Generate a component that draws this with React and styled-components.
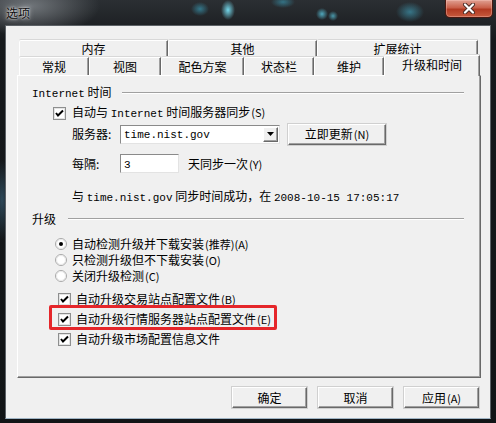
import React from "react";
import styled, { createGlobalStyle } from "styled-components";

const GlobalStyle = createGlobalStyle`
  html, body {
    margin: 0;
    padding: 0;
    background: #15181b;
  }
  body {
    font-family: "Noto Sans CJK SC", "Noto Sans", sans-serif;
    font-size: 12px;
    color: #000;
  }
`;

const Window = styled.div`
  width: 496px;
  height: 423px;
  box-sizing: border-box;
  display: flex;
  flex-direction: column;
  overflow: hidden;
  background:
    radial-gradient(ellipse 7px 10px at 228px 10px, rgba(120, 225, 245, 0.95), transparent),
    radial-gradient(ellipse 9px 7px at 200px 9px, rgba(60, 170, 200, 0.6), transparent),
    radial-gradient(ellipse 12px 6px at 283px 2px, rgba(60, 170, 200, 0.55), transparent),
    radial-gradient(ellipse 6px 6px at 322px 14px, rgba(90, 200, 225, 0.8), transparent),
    radial-gradient(ellipse 5px 5px at 333px 16px, rgba(90, 200, 225, 0.7), transparent),
    radial-gradient(ellipse 14px 10px at 410px 12px, rgba(70, 180, 210, 0.55), transparent),
    radial-gradient(ellipse 10px 40px at 2px 200px, rgba(70, 120, 150, 0.5), transparent),
    radial-gradient(ellipse 70px 30px at 30px 6px, rgba(130, 135, 140, 0.8), transparent),
    linear-gradient(#2b2f33, #16191c 40px, #111416);
`;

const TitleBar = styled.div`
  height: 25px;
  flex: none;
  display: flex;
  justify-content: space-between;
  align-items: flex-start;
`;

const Title = styled.div`
  padding: 6px 0 0 6px;
  line-height: 14px;
  font-size: 12px;
  color: #0c0c0c;
  text-shadow: 0 0 5px rgba(255, 255, 255, 0.9), 0 0 2px rgba(255, 255, 255, 0.9);
`;

const CloseButton = styled.div`
  width: 48px;
  height: 18px;
  margin-right: 3px;
  box-sizing: border-box;
  border: 1px solid #4a1810;
  border-top: none;
  border-radius: 0 0 5px 5px;
  background: linear-gradient(#e0a092, #c9604a 45%, #b23a22 55%, #c75a3e);
  box-shadow: inset 0 0 0 1px rgba(255, 210, 200, 0.35);
  display: flex;
  align-items: center;
  justify-content: center;
`;

const Client = styled.div`
  flex: 1;
  margin: 0 5px 4px 5px;
  background: #f0f0f0;
  border: 1px solid #5c6166;
  border-bottom-color: #9fb4c4;
  padding: 14px 9px 0 11px;
  display: flex;
  flex-direction: column;
`;

const Tabs = styled.div`
  display: flex;
  flex-direction: column;
  padding-left: 2px;
`;

const TabRow = styled.div`
  display: flex;
  align-items: flex-end;
  height: ${(p) => p.h}px;
`;

const Tab = styled.div`
  width: ${(p) => p.w}px;
  height: ${(p) => (p.active ? 21 : p.h)}px;
  box-sizing: border-box;
  background: #f0f0f0;
  border-top: 1px solid #fff;
  border-left: 1px solid #fff;
  border-right: 1px solid #696969;
  box-shadow: inset -1px 0 #a0a0a0, 0 -1px #d8d8d8;
  border-top-left-radius: 2px;
  display: flex;
  justify-content: center;
  align-items: ${(p) => (p.active ? "flex-start" : "center")};
  padding-top: ${(p) => (p.active ? 2 : 0)}px;
  line-height: 14px;
  position: relative;
  z-index: ${(p) => (p.active ? 2 : 0)};
  margin-bottom: ${(p) => (p.active ? -1 : 0)}px;
`;

const Panel = styled.div`
  width: 464px;
  height: 303px;
  box-sizing: border-box;
  border-top: 1px solid #fff;
  border-left: 1px solid #fff;
  border-right: 1px solid #696969;
  border-bottom: 1px solid #696969;
  box-shadow: inset -1px -1px #a0a0a0;
  display: flex;
  flex-direction: column;
  position: relative;
  z-index: 1;
`;

const GroupHeader = styled.div`
  display: flex;
  align-items: center;
  height: 14px;
  line-height: 14px;
  margin-top: ${(p) => p.mt}px;
  padding-left: 14px;
  padding-right: 16px;
`;

const GroupLine = styled.div`
  flex: 1;
  margin-left: ${(p) => p.gap}px;
  border-top: 1px solid #a0a0a0;
  border-bottom: 1px solid #fff;
`;

const Row = styled.div`
  display: flex;
  align-items: center;
  height: ${(p) => p.h}px;
  margin-top: ${(p) => p.mt || 0}px;
  padding-left: ${(p) => p.indent}px;
  line-height: 14px;
  white-space: nowrap;
  position: relative;
`;

const Latin = styled.span`
  font-family: "Liberation Mono", monospace;
  font-size: 11px;
`;

const Small = styled.span`
  font-size: 11px;
  margin-left: 1px;
`;

const BoxWrap = styled.span`
  width: ${(p) => p.size}px;
  height: ${(p) => p.size}px;
  flex: none;
  margin-right: ${(p) => p.gap}px;
  display: inline-flex;
`;

const Label = styled.span`
  width: ${(p) => p.w}px;
  flex: none;
`;

const Combo = styled.div`
  width: 160px;
  height: 19px;
  box-sizing: border-box;
  background: #fff;
  border: 1px solid #8a8a8a;
  border-right-color: #e3e3e3;
  border-bottom-color: #e3e3e3;
  display: flex;
  align-items: center;
  padding-left: 3px;
  padding-right: 1px;
`;

const ComboText = styled.div`
  flex: 1;
`;

const DropButton = styled.div`
  width: 15px;
  height: 15px;
  box-sizing: border-box;
  background: #f0f0f0;
  border-top: 1px solid #fff;
  border-left: 1px solid #fff;
  border-right: 1px solid #696969;
  border-bottom: 1px solid #696969;
  box-shadow: inset -1px -1px #a0a0a0;
  display: flex;
  align-items: center;
  justify-content: center;
`;

const TextInput = styled.div`
  width: 59px;
  height: 19px;
  box-sizing: border-box;
  background: #fff;
  border: 1px solid #8a8a8a;
  border-right-color: #e3e3e3;
  border-bottom-color: #e3e3e3;
  padding: 1px 0 0 3px;
  line-height: 14px;
  margin-right: 9px;
`;

const Button = styled.div`
  width: ${(p) => p.w}px;
  height: ${(p) => p.h}px;
  margin-left: ${(p) => p.ml || 0}px;
  box-sizing: border-box;
  background: #f0f0f0;
  border-top: 1px solid #fff;
  border-left: 1px solid #fff;
  border-right: 1px solid #696969;
  border-bottom: 1px solid #696969;
  box-shadow: inset -1px -1px #a0a0a0;
  outline: 1px solid #d0d0d0;
  display: flex;
  align-items: center;
  justify-content: center;
  line-height: 14px;
  flex: none;
`;

const Highlight = styled.div`
  position: absolute;
  left: 31px;
  top: -4px;
  width: 228px;
  height: 25px;
  box-sizing: border-box;
  border: 3px solid #e5262a;
  border-radius: 2px;
  pointer-events: none;
`;

const ButtonRow = styled.div`
  display: flex;
  justify-content: flex-end;
  gap: 11px;
  margin-top: 9px;
  padding-right: 2px;
`;

function CheckBox({ indentGap = 5 }) {
  return (
    <BoxWrap size={13} gap={indentGap}>
      <svg width="13" height="13" viewBox="0 0 13 13">
        <rect x="0.5" y="0.5" width="12" height="12" fill="#fff" stroke="#8e8f8f" />
        <rect x="1.5" y="1.5" width="10" height="10" fill="none" stroke="#e4e4e4" />
        <path d="M3 6 L5 8.5 L10 3.5" fill="none" stroke="#000" strokeWidth="2" />
      </svg>
    </BoxWrap>
  );
}

function Radio({ checked }) {
  return (
    <BoxWrap size={12} gap={5}>
      <svg width="12" height="12" viewBox="0 0 12 12">
        <circle cx="6" cy="6" r="5.5" fill="#fff" stroke="#a8a8a8" />
        <circle cx="6" cy="6" r="4.5" fill="none" stroke="#e8e8e8" />
        {checked && <circle cx="6" cy="6" r="2" fill="#000" />}
      </svg>
    </BoxWrap>
  );
}

function CloseGlyph() {
  return (
    <svg width="14" height="11" viewBox="0 0 14 11">
      <path d="M3 1.5 L11 9.5 M11 1.5 L3 9.5" stroke="#4a2a24" strokeWidth="4" strokeLinecap="round" />
      <path d="M3 1.5 L11 9.5 M11 1.5 L3 9.5" stroke="#fff" strokeWidth="2.2" strokeLinecap="round" />
    </svg>
  );
}

export default function App() {
  const topTabs = [
    { label: "内存", w: 149 },
    { label: "其他", w: 149 },
    { label: "扩展统计", w: 161 },
  ];
  const bottomTabs = [
    { label: "常规", w: 70 },
    { label: "视图", w: 72 },
    { label: "配色方案", w: 83 },
    { label: "状态栏", w: 70 },
    { label: "维护", w: 70 },
    { label: "升级和时间", w: 96, active: true },
  ];

  return (
    <>
      <GlobalStyle />
      <Window>
        <TitleBar>
          <Title>选项</Title>
          <CloseButton>
            <CloseGlyph />
          </CloseButton>
        </TitleBar>

        <Client>
          <Tabs>
            <TabRow h={17}>
              {topTabs.map((t) => (
                <Tab key={t.label} w={t.w} h={17}>
                  {t.label}
                </Tab>
              ))}
            </TabRow>
            <TabRow h={18}>
              {bottomTabs.map((t) => (
                <Tab key={t.label} w={t.w} h={18} active={t.active}>
                  {t.label}
                </Tab>
              ))}
            </TabRow>
          </Tabs>

          <Panel>
            <GroupHeader mt={10}>
              <span>
                <Latin>Internet</Latin> 时间
              </span>
              <GroupLine gap={10} />
            </GroupHeader>

            <Row h={14} mt={6} indent={35}>
              <CheckBox indentGap={6} />
              <span>
                自动与 <Latin>Internet</Latin> 时间服务器同步<Small>(S)</Small>
              </span>
            </Row>

            <Row h={22} mt={3} indent={54}>
              <Label w={48}>服务器:</Label>
              <Combo>
                <ComboText>
                  <Latin>time.nist.gov</Latin>
                </ComboText>
                <DropButton>
                  <svg width="7" height="4" viewBox="0 0 7 4">
                    <path d="M0 0 H7 L3.5 4 Z" fill="#000" />
                  </svg>
                </DropButton>
              </Combo>
              <Button w={98} h={21} ml={8}>
                立即更新<Small>(N)</Small>
              </Button>
            </Row>

            <Row h={21} mt={8} indent={54}>
              <Label w={48}>每隔:</Label>
              <TextInput>
                <Latin>3</Latin>
              </TextInput>
              <span>
                天同步一次<Small>(Y)</Small>
              </span>
            </Row>

            <Row h={14} mt={16} indent={54}>
              <span>
                与 <Latin>time.nist.gov</Latin> 同步时间成功，在 <Latin>2008-10-15 17:05:17</Latin>
              </span>
            </Row>

            <GroupHeader mt={8}>
              <span>升级</span>
              <GroupLine gap={12} />
            </GroupHeader>

            <Row h={16} mt={10} indent={37}>
              <Radio checked />
              <span>
                自动检测升级并下载安装<Small>(推荐)(A)</Small>
              </span>
            </Row>
            <Row h={16} indent={37}>
              <Radio />
              <span>
                只检测升级但不下载安装<Small>(O)</Small>
              </span>
            </Row>
            <Row h={16} indent={37}>
              <Radio />
              <span>
                关闭升级检测<Small>(C)</Small>
              </span>
            </Row>

            <Row h={20} mt={5} indent={40}>
              <CheckBox />
              <span>
                自动升级交易站点配置文件<Small>(B)</Small>
              </span>
            </Row>
            <Row h={20} indent={40}>
              <Highlight />
              <CheckBox />
              <span>
                自动升级行情服务器站点配置文件<Small>(E)</Small>
              </span>
            </Row>
            <Row h={20} indent={40}>
              <CheckBox />
              <span>自动升级市场配置信息文件</span>
            </Row>
          </Panel>

          <ButtonRow>
            <Button w={75} h={21}>
              确定
            </Button>
            <Button w={75} h={21}>
              取消
            </Button>
            <Button w={75} h={21}>
              应用<Small>(A)</Small>
            </Button>
          </ButtonRow>
        </Client>
      </Window>
    </>
  );
}
